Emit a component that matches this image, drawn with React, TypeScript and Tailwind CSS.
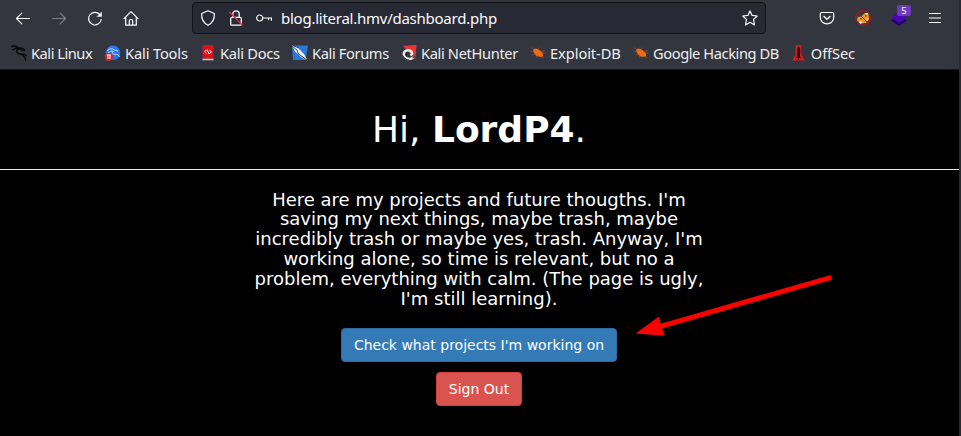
import type { ReactNode } from "react";

function Dragon({ className, color }: { className?: string; color: string }) {
  return (
    <svg viewBox="0 0 16 16" className={className ?? "h-4 w-4"} fill="none" stroke={color}>
      <path d="M0.3 1.5 L4 1 L8.5 3.2 L11 3.2 L14 5 M1.3 4.8 L5 3.3 L8 4.5 M8 3.2 C4.8 5.5 5 8.3 8.3 8.7 C12 9.2 14 11 14.8 15.5" strokeWidth="1.4" />
      <path d="M7 3 L10 4.6 L14.2 5.8 M10 9 L13.5 9.3 L15.6 11.2" strokeWidth="1.2" />
    </svg>
  );
}

function ToolsIcon() {
  return (
    <svg viewBox="0 0 16 16" className="h-4 w-4">
      <circle cx="8" cy="7.8" r="7.3" fill="#2777ef" />
      <path d="M2 6 Q6 2 9 5 L13 6 M3 8 Q6 5 8.5 6.5 C5.5 9 9 9.2 12 9.5 Q14 10 14.5 12" stroke="#b9dcff" strokeWidth="1" fill="none" />
      <circle cx="3.9" cy="11.8" r="4" fill="#e0222c" />
      <path d="M1.8 10 H6 M3 10 V14 M5 10 V14" stroke="#fff" strokeWidth="1" />
    </svg>
  );
}

function DocsIcon() {
  return (
    <svg viewBox="0 0 16 16" className="h-4 w-4">
      <path d="M1.5 0.5 H3 V15.5 H1.5 Z" fill="#183c76" />
      <rect x="2.5" y="0" width="11" height="13.7" fill="#dc1117" />
      <path d="M2.5 13.7 H13.5 V15.3 H2.5 Z" fill="#c9c5c8" />
      <path d="M6.6 5 L4.8 6.8 L6.6 8.6 M9.5 5 L11.4 6.8 L9.5 8.6 M7 4.7 L9.3 9" stroke="#fff" strokeWidth="1" fill="none" />
    </svg>
  );
}

function ForumsIcon() {
  return (
    <svg viewBox="0 0 16 16" className="h-4 w-4">
      <path d="M0 0.5 H16 L13.5 15 H1 Z" fill="#2878dc" />
      <path d="M0 0.5 L5 2 L9 6 L12 9 L15.5 15.5 L9 12 L6 9 L3 6.5 Z" fill="#f5f3ed" />
      <path d="M0 1 L5 5 L6.5 9 L15 15 M1 0.5 L6 2.8" stroke="#1d2533" strokeWidth="0.8" fill="none" />
    </svg>
  );
}

function HunterIcon() {
  return (
    <svg viewBox="0 0 16 16" className="h-4 w-4">
      <path d="M2 0.8 L15.5 0 L14.7 12 L8 8 Z" fill="#ee3038" />
      <path d="M12.8 12.2 C8 16 2 13 2.7 8.8 C3.3 5 8.5 4.2 10.5 6.7 Q12 9 9.5 10.5" stroke="#edf3f3" strokeWidth="2.5" fill="none" />
      <path d="M5.3 10.5 Q5.5 7.7 8 7.8 M1 10 Q4 15 8 15" stroke="#24262e" strokeWidth="1.1" fill="none" />
      <path d="M11.5 13 L14 12 L15.3 15 M0.5 7 L1 10" stroke="#b71535" strokeWidth="1.2" fill="none" />
    </svg>
  );
}

function BugIcon() {
  return (
    <svg viewBox="0 0 16 16" className="h-4 w-4">
      <path d="M3 4.5 Q6 2.3 9.5 5.2 L12.7 7.8 L13.2 11.8 L9 11.7 Q5.5 11 3.5 7 Z" fill="#f06a15" />
      <path d="M4 5 L1 2.5 M3.5 7 L0.5 6.2 M5 9 L2.5 10 M7 11 L6 13 M8.5 4.5 L9 2.5 M11 6.5 L15 5.5 M12 8 L15.5 8.2 M12 11 L14 13" stroke="#9a5034" strokeWidth="0.7" />
    </svg>
  );
}

function OffSecIcon() {
  return (
    <svg viewBox="0 0 16 16" className="h-4 w-4">
      <path d="M4.5 0 H10.5 V9.5 L14 15.7 H1 L4.5 9.5 Z" fill="#d71920" />
      <path d="M7.2 1.5 H8.3 L9.5 6 L9 11 L10 13 H8 V15 H7 V13 H5 L6.3 11 L6 6 Z" fill="#241012" />
    </svg>
  );
}

function Bookmark({ icon, label, width, tracking }: { icon: ReactNode; label: string; width: string; tracking: string }) {
  return (
    <div className={`flex shrink-0 items-center gap-1 whitespace-nowrap ${width}`}>
      {icon}
      <span className={tracking}>{label}</span>
    </div>
  );
}

function NavIcons() {
  return (
    <div className="flex w-[192px] shrink-0 items-center gap-5 pl-[15px] text-[#fbfbfe]">
      <svg viewBox="0 0 16 16" className="h-4 w-4" fill="none" stroke="currentColor" strokeWidth="1.2" strokeLinecap="round" strokeLinejoin="round"><path d="M14.5 8.5 H1.5 M6.8 3.2 L1.5 8.5 L6.8 13.8" /></svg>
      <svg viewBox="0 0 16 16" className="h-4 w-4 text-[#7d7f84]" fill="none" stroke="currentColor" strokeWidth="1.2" strokeLinecap="round" strokeLinejoin="round"><path d="M1.5 8.5 H14.5 M9.2 3.2 L14.5 8.5 L9.2 13.8" /></svg>
      <svg viewBox="0 0 16 16" className="h-4 w-4" fill="none" stroke="currentColor" strokeWidth="1.2" strokeLinecap="round"><path d="M12.7 4.5 A6.3 6.3 0 1 0 14.2 9.5" /><path d="M14.5 2.4 V6.5 H10.4 Z" fill="currentColor" strokeWidth="0.5" /></svg>
      <svg viewBox="0 0 16 16" className="h-4 w-4" fill="none" stroke="currentColor" strokeWidth="1.2" strokeLinecap="round" strokeLinejoin="round"><path d="M1 8.7 L8 1.7 L15 8.7 M2.7 7.5 V15.2 H13.3 V7.5 M6.3 15 V10.8 Q6.3 9.5 8 9.5 Q9.7 9.5 9.7 10.8 V15" /></svg>
    </div>
  );
}

function AddressBar() {
  return (
    <div className="flex h-8 w-[574px] shrink-0 items-center rounded border border-[#111318] bg-[#272935] text-[#fbfbfe]">
      <svg viewBox="0 0 16 16" className="ml-[7px] h-4 w-4" fill="none" stroke="currentColor" strokeWidth="1.2" strokeLinejoin="round"><path d="M8 0.8 L14.3 3.5 C14.7 8.7 12.3 13.1 8 15.2 C3.7 13.1 1.3 8.7 1.7 3.5 Z" /></svg>
      <svg viewBox="0 0 16 16" className="ml-3 h-4 w-4" fill="none" stroke="currentColor" strokeWidth="1.3"><rect x="2.7" y="7.3" width="10.6" height="7.8" rx="1.2" /><path d="M4.8 7 V4.2 C4.8 -0.2 11.2 -0.2 11.2 4.2 V7" /><path d="M1.3 2 L14.5 15.2" stroke="#e22850" strokeWidth="1.3" /></svg>
      <svg viewBox="0 0 16 16" className="ml-3 h-4 w-4" fill="none" stroke="currentColor" strokeWidth="1.2"><circle cx="3.7" cy="8" r="3" /><path d="M6.7 8 H15.5 V10.7 M12.5 8 V10.3" /></svg>
      <span className="ml-[9px] grow text-[15px] leading-5 tracking-[-0.25px] whitespace-nowrap">blog.literal.hmv/dashboard.php</span>
      <svg viewBox="0 0 16 16" className="mr-[7px] h-4 w-4" fill="none" stroke="currentColor" strokeWidth="1.2" strokeLinejoin="round"><path d="M8 0.9 L10.1 5.4 L15.2 6 L11.5 9.5 L12.5 14.9 L8 12.3 L3.5 14.9 L4.5 9.5 L0.8 6 L5.9 5.4 Z" /></svg>
    </div>
  );
}

function Extensions() {
  return (
    <div className="flex items-center gap-5 pl-[53px] text-[#fbfbfe]">
      <svg viewBox="0 0 16 16" className="h-4 w-4" fill="none" stroke="currentColor" strokeWidth="1.2" strokeLinecap="round" strokeLinejoin="round"><path d="M2.7 2.5 H13.3 Q14.7 2.5 14.7 4 V7.5 C14.7 16 1.3 16 1.3 7.5 V4 Q1.3 2.5 2.7 2.5 Z M4.8 6.3 L8 9.3 L11.2 6.3" /></svg>
      <svg viewBox="0 0 16 16" className="h-4 w-4">
        <path d="M2.5 7 L6 6.5 L10 3 L13.5 2.5 L14 9 L11 13 L6 13.5 L2 10.5 Z" fill="#ee9422" />
        <path d="M3.5 12 L6 11 L7.5 12.5 L5.5 14 Z M11 9 L13.5 8 L13 11 Z M10 3.5 L13 3 L12 5 Z" fill="#efe2d0" />
        <path d="M5 8.7 H6.7 M10.3 6.3 L11.5 5.5" stroke="#593219" strokeWidth="1.1" />
        <circle cx="8" cy="8" r="7.4" fill="none" stroke="#c4100f" strokeWidth="1" /><path d="M3 3 L13 13" stroke="#c4100f" strokeWidth="1" />
      </svg>
      <div className="relative h-4 w-4">
        <svg viewBox="0 0 16 16" className="h-4 w-4"><path d="M8 4.5 L16 10.5 L8 16 L0 10.5 Z" fill="#20006f" /><path d="M8 1.5 L16 7.5 L8 13 L0 7.5 Z" fill="#4b08b4" /></svg>
        <span className="absolute -top-[5px] left-[6px] flex h-[11px] w-[14px] items-center justify-center rounded-[2px] bg-[#6e3abf] text-[9.5px] leading-none text-white">5</span>
      </div>
      <svg viewBox="0 0 16 16" className="h-4 w-4" stroke="currentColor" strokeWidth="1.2"><path d="M2 3.5 H14 M2 8 H14 M2 12.5 H14" /></svg>
    </div>
  );
}

export default function App() {
  return (
    <div className="relative flex h-[436px] w-[961px] flex-col overflow-hidden border-r-2 border-[#292b34] bg-black">
      <header className="h-[70px] shrink-0 border-b border-[#17181c] bg-[#33363e] font-['Noto_Sans',sans-serif]">
        <div className="flex h-9 items-center">
          <NavIcons />
          <AddressBar />
          <Extensions />
        </div>
        <nav className="flex h-[33px] items-center pt-px pl-[11px] text-[14.67px] leading-5 text-[#eeeef1]">
          <Bookmark width="w-[94px]" tracking="tracking-[-0.48px]" label="Kali Linux" icon={<Dragon color="#08090b" />} />
          <Bookmark width="w-[95px]" tracking="tracking-[-0.15px]" label="Kali Tools" icon={<ToolsIcon />} />
          <Bookmark width="w-[92px]" tracking="tracking-[-0.28px]" label="Kali Docs" icon={<DocsIcon />} />
          <Bookmark width="w-[109px]" tracking="tracking-[-0.38px]" label="Kali Forums" icon={<ForumsIcon />} />
          <Bookmark width="w-[129px]" tracking="tracking-[-0.36px]" label="Kali NetHunter" icon={<HunterIcon />} />
          <Bookmark width="w-[103px]" tracking="tracking-[-0.08px]" label="Exploit-DB" icon={<BugIcon />} />
          <Bookmark width="w-[158px]" tracking="tracking-[-0.42px]" label="Google Hacking DB" icon={<BugIcon />} />
          <Bookmark width="w-[64px]" tracking="tracking-[-0.12px]" label="OffSec" icon={<OffSecIcon />} />
        </nav>
      </header>
      <main className="flex flex-col items-center font-['DejaVu_Sans',sans-serif] text-white">
        <h1 className="mt-10 mr-px text-[36px] leading-[39.6px] font-normal">Hi, <b className="font-bold">LordP4</b>.</h1>
        <hr className="mt-[19px] w-full border-t border-[#eeeeee]" />
        <p className="mt-5 mr-px w-[460px] text-center text-[18px] leading-[19.8px]">
          Here are my projects and future thougths. I'm saving my next things, maybe trash, maybe incredibly trash or maybe yes, trash. Anyway, I'm working alone, so time is relevant, but no a problem, everything with calm. (The page is ugly, I'm still learning).
        </p>
        <button className="mt-5 mr-px h-[34px] w-[276px] rounded-[4px] border border-[#2e6da4] bg-[#337ab7] text-[14px] leading-5">Check what projects I'm working on</button>
        <button className="mt-[10px] mr-px h-[34px] w-[86px] rounded-[4px] border border-[#d43f3a] bg-[#d9534f] text-[14px] leading-5">Sign Out</button>
      </main>
      <svg viewBox="0 0 200 64" className="absolute top-[273px] left-[634px] h-16 w-[200px]" fill="#ff0000">
        <path d="M1.5 60.5 L25 43.5 L26.7 50.7 L196.7 2 L198 6.7 L28.2 55.5 L30.7 62.7 Z" />
      </svg>
    </div>
  );
}
